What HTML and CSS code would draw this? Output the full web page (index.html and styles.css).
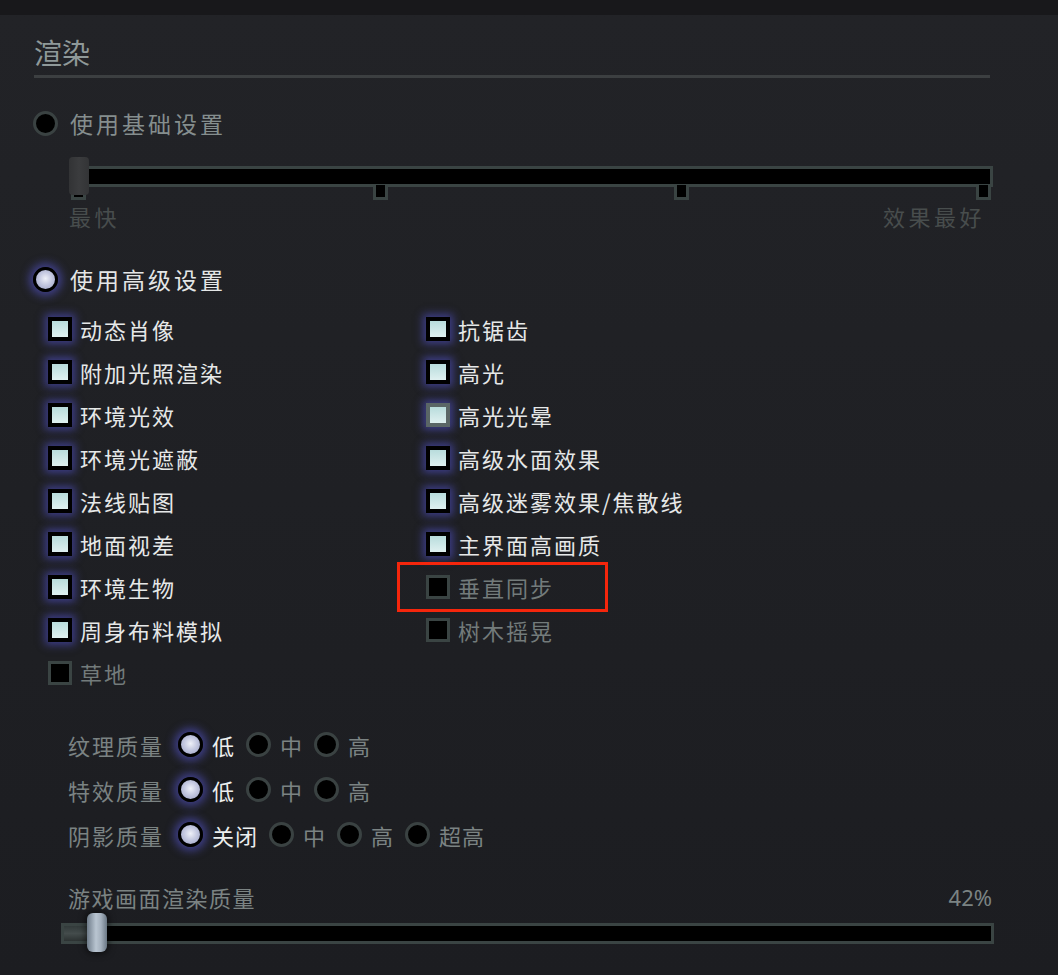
FILE: index.html
```html
<!DOCTYPE html>
<html lang="zh-CN">
<head>
  <meta charset="UTF-8">
  <title>渲染设置</title>
  <link rel="stylesheet" href="styles.css">
</head>
<body>

  <div class="topbar"></div>

  <div class="panel">
    <h2 class="title">渲染</h2>

    <!-- 基础设置 -->
    <div class="opt">
      <span class="radio"></span>
      <span class="opt-text">使用基础设置</span>
    </div>

    <div class="preset">
      <div class="slider">
        <div class="track"></div>
        <div class="ticks">
          <span class="tick"></span>
          <span class="tick"></span>
          <span class="tick"></span>
          <span class="tick"></span>
        </div>
        <div class="knob"></div>
      </div>
      <div class="preset-labels">
        <span>最快</span>
        <span>效果最好</span>
      </div>
    </div>

    <!-- 高级设置 -->
    <div class="opt on">
      <span class="radio"></span>
      <span class="opt-text">使用高级设置</span>
    </div>

    <div class="checks">
      <div class="check on"><span class="box"></span>动态肖像</div>
      <div class="check on"><span class="box"></span>附加光照渲染</div>
      <div class="check on"><span class="box"></span>环境光效</div>
      <div class="check on"><span class="box"></span>环境光遮蔽</div>
      <div class="check on"><span class="box"></span>法线贴图</div>
      <div class="check on"><span class="box"></span>地面视差</div>
      <div class="check on"><span class="box"></span>环境生物</div>
      <div class="check on"><span class="box"></span>周身布料模拟</div>
      <div class="check"><span class="box"></span>草地</div>

      <div class="check on"><span class="box"></span>抗锯齿</div>
      <div class="check on"><span class="box"></span>高光</div>
      <div class="check on hover"><span class="box"></span>高光光晕</div>
      <div class="check on"><span class="box"></span>高级水面效果</div>
      <div class="check on"><span class="box"></span>高级迷雾效果/焦散线</div>
      <div class="check on"><span class="box"></span>主界面高画质</div>
      <div class="check marked"><span class="box"></span>垂直同步<span class="mark"></span></div>
      <div class="check"><span class="box"></span>树木摇晃</div>
    </div>

    <!-- 质量 -->
    <div class="quality">
      <div class="q-row">
        <span class="q-label">纹理质量</span>
        <span class="q-opt on"><span class="radio"></span>低</span>
        <span class="q-opt"><span class="radio"></span>中</span>
        <span class="q-opt"><span class="radio"></span>高</span>
      </div>
      <div class="q-row">
        <span class="q-label">特效质量</span>
        <span class="q-opt on"><span class="radio"></span>低</span>
        <span class="q-opt"><span class="radio"></span>中</span>
        <span class="q-opt"><span class="radio"></span>高</span>
      </div>
      <div class="q-row">
        <span class="q-label">阴影质量</span>
        <span class="q-opt on"><span class="radio"></span>关闭</span>
        <span class="q-opt"><span class="radio"></span>中</span>
        <span class="q-opt"><span class="radio"></span>高</span>
        <span class="q-opt"><span class="radio"></span>超高</span>
      </div>
    </div>

    <!-- 渲染质量 -->
    <div class="render-head">
      <span>游戏画面渲染质量</span>
      <span class="pct">42%</span>
    </div>
    <div class="render-slider">
      <div class="render-track">
        <div class="render-fill"></div>
      </div>
      <div class="render-knob"></div>
    </div>
  </div>

</body>
</html>
```

FILE: styles.css
```css
html, body {
  margin: 0;
  padding: 0;
  background: #1c1d21;
  font-family: "Noto Sans CJK SC", "Noto Sans", sans-serif;
}

.topbar {
  height: 15px;
  background: #18181b;
}

.panel {
  height: 960px;
  padding-left: 33px;
  background: linear-gradient(to bottom, #222327, #1c1d21);
  overflow: hidden;
}

.title {
  width: 956px;
  margin: 0 0 0 1px;
  padding-top: 18px;
  padding-bottom: 4px;
  font-size: 28px;
  line-height: 38px;
  font-weight: normal;
  color: #8f9999;
  border-bottom: 3px solid #3c3f41;
}

/* 单选 */
.opt {
  display: flex;
  align-items: center;
  height: 30px;
  margin-top: 30px;
}

.opt-text {
  margin-left: 12px;
  font-size: 23px;
  letter-spacing: 3px;
  color: #858e8e;
}

.opt.on .opt-text {
  color: #e4e6e6;
}

.radio {
  display: inline-block;
  box-sizing: border-box;
  width: 25px;
  height: 25px;
  border-radius: 50%;
  border: 3px solid #3a4242;
  background: #000;
  flex: none;
}

.on > .radio {
  border-color: #000;
  background: radial-gradient(circle at 50% 45%, #eef0f8 0%, #c4c8e0 45%, #9aa0c4 100%);
  box-shadow: 0 0 9px 4px rgba(84, 84, 200, 0.6);
}

/* 基础预设滑块 */
.preset {
  margin-left: 36px;
  width: 924px;
}

.slider {
  position: relative;
  margin-top: 19px;
  padding-top: 9px;
}

.track {
  box-sizing: border-box;
  height: 21px;
  border: 3px solid #3a4443;
  background: #000;
}

.ticks {
  display: flex;
  justify-content: space-between;
  padding: 0 2px;
  margin-top: -2px;
}

.tick {
  box-sizing: border-box;
  width: 15px;
  height: 15px;
  border: 3px solid #3a4443;
  border-top: none;
  background: #000;
}

.knob {
  position: absolute;
  left: 0;
  top: 0;
  width: 20px;
  height: 38px;
  border-radius: 4px;
  background: linear-gradient(to right, #323335, #3b3c3e 50%, #333436);
}

.preset-labels {
  display: flex;
  justify-content: space-between;
  padding-right: 8px;
  margin-top: 4px;
  font-size: 22px;
  line-height: 24px;
  letter-spacing: 3.5px;
  color: #484d4d;
}

.opt.on {
  margin-top: 36px;
}

/* 复选框 */
.checks {
  display: grid;
  grid-template-columns: 378px 378px;
  grid-template-rows: repeat(9, 43px);
  grid-auto-flow: column;
  margin: 13px 0 0 15px;
}

.check {
  position: relative;
  display: flex;
  align-items: center;
  font-size: 22px;
  letter-spacing: 2px;
  color: #737b7b;
}

.check.on {
  color: #e6e8e8;
}

.box {
  box-sizing: border-box;
  width: 24px;
  height: 24px;
  margin-right: 8px;
  border: 3px solid #3a4443;
  background: #000;
  flex: none;
}

.check.on .box {
  border: 4px solid #000;
  background: linear-gradient(to bottom, #b8dcdc, #dff0f0);
  box-shadow: 0 0 8px 3px rgba(80, 80, 200, 0.6);
}

.check.hover .box {
  border-color: #5a6666;
}

.mark {
  position: absolute;
  left: -29px;
  top: -3px;
  box-sizing: border-box;
  width: 211px;
  height: 50px;
  border: 3px solid #f5260c;
}

/* 质量选项 */
.quality {
  margin: 28px 0 0 35px;
}

.q-row {
  display: flex;
  align-items: center;
  height: 45px;
}

.q-label {
  width: 110px;
  font-size: 22px;
  letter-spacing: 2px;
  color: #7b8383;
}

.q-opt {
  display: flex;
  align-items: center;
  margin-right: 11px;
  font-size: 22px;
  letter-spacing: 1px;
  color: #7b8383;
}

.q-opt .radio {
  margin-right: 9px;
}

.q-opt.on {
  color: #eceeee;
}

/* 渲染质量滑块 */
.render-head {
  display: flex;
  justify-content: space-between;
  width: 924px;
  margin: 27px 0 0 35px;
  line-height: 26px;
  font-size: 22px;
  letter-spacing: 1.5px;
  color: #7b8383;
}

.pct {
  font-family: "Noto Sans", sans-serif;
  font-size: 22px;
  letter-spacing: 0;
}

.render-slider {
  position: relative;
  width: 933px;
  margin: 3px 0 0 28px;
  padding: 10px 0 8px;
}

.render-track {
  box-sizing: border-box;
  height: 21px;
  border: 3px solid #3a4443;
  background: #000;
}

.render-fill {
  width: 23px;
  height: 100%;
  background: linear-gradient(to bottom, #323a3a, #444c4c 50%, #2c3232);
}

.render-knob {
  position: absolute;
  left: 26px;
  top: 0;
  width: 20px;
  height: 39px;
  border-radius: 6px;
  background: linear-gradient(to right, #6f7c8a, #b9c5d1 45%, #a4b0bd 70%, #6a7784);
  box-shadow: 0 0 6px 2px rgba(0, 0, 0, 0.5);
}
```
